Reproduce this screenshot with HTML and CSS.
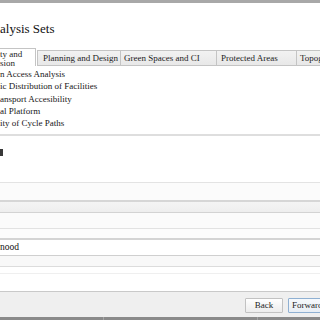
FILE: index.html
```html
<!DOCTYPE html>
<html>
<head>
<meta charset="utf-8">
<link rel="stylesheet" href="styles.css">
</head>
<body>
<div class="win">
  <div class="topbar"></div>
  <div class="title">alysis Sets</div>
  <div class="tabs">
    <div class="tab sel"><span>ty and<br>sion</span></div>
    <div class="tab t2">Planning and Design</div>
    <div class="tab t3">Green Spaces and CI</div>
    <div class="tab t4">Protected Areas</div>
    <div class="tab t5">Topography</div>
  </div>
  <div class="pane">
    <div class="item">n Access Analysis</div>
    <div class="item">ic Distribution of Facilities</div>
    <div class="item">ansport Accesibility</div>
    <div class="item">al Platform</div>
    <div class="item">ity of Cycle Paths</div>
  </div>
  <div class="section">
    <div class="mark"></div>
  </div>
  <div class="row ra"></div>
  <div class="row rb"></div>
  <div class="row rc"></div>
  <div class="row rd"></div>
  <div class="row re">nood</div>
  <div class="row rf"></div>
  <div class="row rg"></div>
  <div class="row rh"></div>
  <div class="footer">
    <div class="btn back">Back</div>
    <div class="btn fwd">Forward</div>
  </div>
  <div class="bottombar"><span class="tick t-a"></span><span class="tick t-b"></span></div>
</div>
</body>
</html>
```
FILE: styles.css
```css
html, body {
  margin: 0;
  padding: 0;
  background: #ffffff;
}
.win {
  width: 320px;
  height: 320px;
  overflow: hidden;
  font-family: "Liberation Serif", "Times New Roman", serif;
  color: #161616;
  display: flex;
  flex-direction: column;
}
.topbar {
  height: 3px;
  flex: none;
  background: #a8a8a8;
}
.title {
  flex: none;
  margin-top: 18px;
  height: 15px;
  line-height: 15px;
  font-size: 13px;
  color: #111111;
  margin-bottom: 12px;
  white-space: nowrap;
}
.tabs {
  flex: none;
  height: 18px;
  display: flex;
  align-items: flex-end;
  white-space: nowrap;
}
.tab {
  box-sizing: border-box;
  height: 16px;
  border: 1px solid #c4c4c4;
  border-left: none;
  background: linear-gradient(#f2f2f2, #e8e8e8);
  font-size: 9px;
  line-height: 11px;
  padding-top: 2px;
  padding-left: 4px;
  color: #1c1c1c;
  flex: none;
}
.tab.sel {
  width: 36px;
  height: 18px;
  background: #ffffff;
  border-bottom: none;
  border-right: 1px solid #c4c4c4;
  padding: 1px 0 0 0;
  line-height: 8.5px;
  position: relative;
  z-index: 1;
}
.tab.t2 {
  width: 84px;
  margin-left: 1px;
  border-left: 1px solid #c4c4c4;
  padding-left: 5px;
}
.tab.t3 { width: 96px; padding-left: 3px; }
.tab.t4 { width: 80px; padding-left: 4px; }
.tab.t5 { width: 60px; padding-left: 3px; }
.pane {
  flex: none;
  box-sizing: border-box;
  height: 70px;
  padding-top: 2px;
  border-bottom: 2px solid #dedede;
  background: #ffffff;
}
.item {
  font-size: 9px;
  line-height: 12.3px;
  white-space: nowrap;
  color: #161616;
}
.section {
  flex: none;
  height: 46px;
  padding-top: 13px;
  box-sizing: border-box;
}
.mark {
  width: 3px;
  height: 7px;
  background: #383838;
}
.row {
  flex: none;
  box-sizing: content-box;
}
.ra { border-top: 1px solid #e3e3e3; background: #fbfbfb; height: 17px; }
.rb { border-top: 2px solid #d6d6d6; background: linear-gradient(#f4f4f4, #eeeeee); height: 10px; }
.rc { border-top: 1px solid #d3d3d3; background: #fbfbfb; height: 15px; }
.rd { border-top: 1px solid #e2e2e2; background: #fcfcfc; height: 9px; }
.re {
  border-top: 2px solid #d4d4d4;
  background: #ffffff;
  height: 15px;
  font-size: 9.5px;
  line-height: 15px;
  color: #111111;
}
.rf { border-top: 1px solid #cfcfcf; background: #f8f8f8; height: 10px; }
.rg { border-top: 1px solid #dcdcdc; background: #ffffff; height: 6px; }
.rh { border-top: 1px solid #efefef; background: #ffffff; height: 17px; }
.footer {
  flex: none;
  height: 25px;
  box-sizing: content-box;
  border-top: 1px solid #c9c9c9;
  background: #efefef;
  display: flex;
  align-items: flex-start;
  gap: 5px;
  padding-left: 245px;
}
.btn {
  flex: none;
  box-sizing: border-box;
  margin-top: 6px;
  height: 15px;
  font-size: 9px;
  line-height: 13px;
  text-align: center;
  border: 1px solid #c2c2c2;
  border-radius: 1px;
  background: linear-gradient(#ffffff, #ececec);
  color: #1c1c1c;
  white-space: nowrap;
}
.back { width: 38px; }
.fwd {
  width: 46px;
  text-align: left;
  padding-left: 3px;
  border-color: #8fb0d2;
  background: linear-gradient(#f6f9fc, #e8eef5);
}
.bottombar {
  flex: none;
  height: 3px;
  background: #8a8a8a;
  position: relative;
}
.tick {
  position: absolute;
  top: 0;
  width: 1px;
  height: 3px;
  background: #a5a5a5;
}
.t-a { left: 103px; }
.t-b { left: 257px; }
```
